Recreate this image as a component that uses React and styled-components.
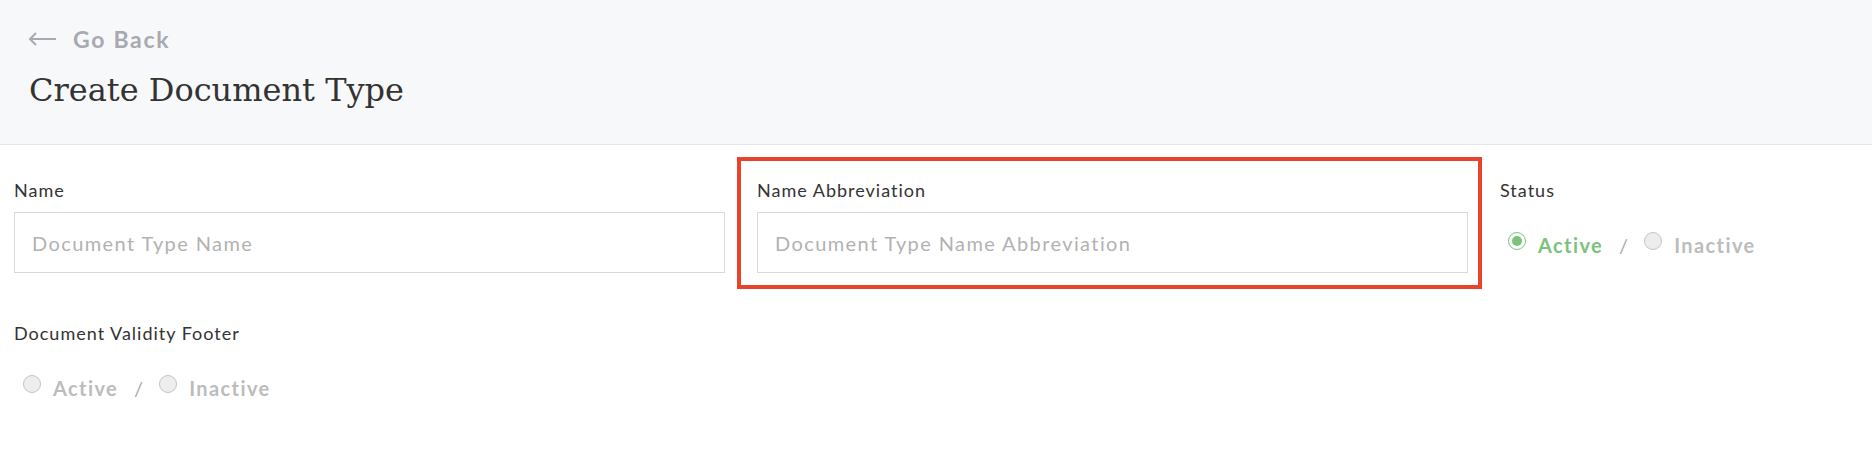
import React from 'react';
import styled, { createGlobalStyle } from 'styled-components';

const GlobalStyle = createGlobalStyle`
  * {
    box-sizing: border-box;
  }
  body {
    margin: 0;
    background: #fff;
    font-family: Lato, 'Open Sans', sans-serif;
  }
`;

const Page = styled.div`
  width: 1872px;
  min-height: 468px;
  background: #fff;
`;

const Header = styled.header`
  height: 145px;
  background: #f7f8fa;
  border-bottom: 1px solid #e5e7ea;
  padding: 25px 29px 0;
`;

const BackLink = styled.a`
  display: flex;
  align-items: center;
  gap: 17px;
  color: #a9a9b1;
  font-size: 23px;
  font-weight: 700;
  letter-spacing: 1.7px;
  line-height: 28px;
  text-decoration: none;
  cursor: pointer;
`;

const Title = styled.h1`
  margin: 17px 0 0;
  font-family: 'DejaVu Serif', 'Liberation Serif', serif;
  font-weight: 400;
  font-size: 32px;
  line-height: 40px;
  color: #333;
`;

const Body = styled.div`
  padding: 33px 14px 0;
  display: flex;
  flex-direction: column;
  gap: 48px;
`;

const Row = styled.div`
  display: grid;
  grid-template-columns: 711px 711px 1fr;
  column-gap: 32px;
`;

const Field = styled.div`
  position: relative;
  display: flex;
  flex-direction: column;

  ${(props) =>
    props.highlighted &&
    `
    &::after {
      content: '';
      position: absolute;
      top: -21px;
      right: -14px;
      bottom: -16px;
      left: -20px;
      border: 4px solid #e8432b;
      pointer-events: none;
    }
  `}
`;

const Label = styled.label`
  font-size: 18px;
  letter-spacing: 1px;
  line-height: 24px;
  color: #333;
`;

const Input = styled.input`
  margin-top: 10px;
  height: 61px;
  width: 100%;
  border: 1px solid #d9d9d9;
  background: #fff;
  padding: 0 17px;
  font-family: Lato, 'Open Sans', sans-serif;
  font-size: 20px;
  font-weight: 400;
  letter-spacing: 1.4px;
  color: #333;
  outline: none;

  &::placeholder {
    color: #b2b2b2;
  }
`;

const RadioRow = styled.div`
  margin-top: 29px;
  padding-left: ${(props) => props.indent}px;
  display: flex;
  align-items: flex-start;
`;

const RadioOption = styled.label`
  display: flex;
  align-items: flex-start;
  gap: 12px;
  cursor: pointer;
`;

const RadioCircle = styled.span`
  margin-top: 1px;
  width: 18px;
  height: 18px;
  border-radius: 50%;
  border: 1.5px solid ${(props) => (props.checked ? '#7dc47f' : '#c4c4c4')};
  background: ${(props) => (props.checked ? '#fff' : '#ededed')};
  display: flex;
  align-items: center;
  justify-content: center;

  &::after {
    content: '';
    display: ${(props) => (props.checked ? 'block' : 'none')};
    width: 10px;
    height: 10px;
    border-radius: 50%;
    background: #7cc27e;
  }
`;

const RadioText = styled.span`
  font-size: 20px;
  font-weight: 700;
  letter-spacing: 1.4px;
  line-height: 28px;
  color: ${(props) => (props.checked ? '#7cc27e' : '#bcbcbc')};
`;

const Slash = styled.span`
  margin: 0 16px;
  font-size: 20px;
  line-height: 28px;
  color: #a9a9a9;
`;

const BackArrow = () => (
  <svg width="27" height="14" viewBox="0 0 27 14" fill="none">
    <path d="M1 7h26M7 1L1 7l6 6" stroke="#a9a9b1" strokeWidth="2" />
  </svg>
);

const Radio = ({ checked, children }) => (
  <RadioOption>
    <RadioCircle checked={checked} />
    <RadioText checked={checked}>{children}</RadioText>
  </RadioOption>
);

const StatusToggle = ({ value, indent }) => (
  <RadioRow indent={indent}>
    <Radio checked={value === 'active'}>Active</Radio>
    <Slash>/</Slash>
    <Radio checked={value === 'inactive'}>Inactive</Radio>
  </RadioRow>
);

const App = () => {
  return (
    <Page>
      <GlobalStyle />
      <Header>
        <BackLink>
          <BackArrow />
          Go Back
        </BackLink>
        <Title>Create Document Type</Title>
      </Header>
      <Body>
        <Row>
          <Field>
            <Label>Name</Label>
            <Input placeholder="Document Type Name" />
          </Field>
          <Field highlighted>
            <Label>Name Abbreviation</Label>
            <Input placeholder="Document Type Name Abbreviation" />
          </Field>
          <Field>
            <Label>Status</Label>
            <StatusToggle value="active" indent={8} />
          </Field>
        </Row>
        <Row>
          <Field>
            <Label>Document Validity Footer</Label>
            <StatusToggle value={null} indent={9} />
          </Field>
        </Row>
      </Body>
    </Page>
  );
};

export default App;
